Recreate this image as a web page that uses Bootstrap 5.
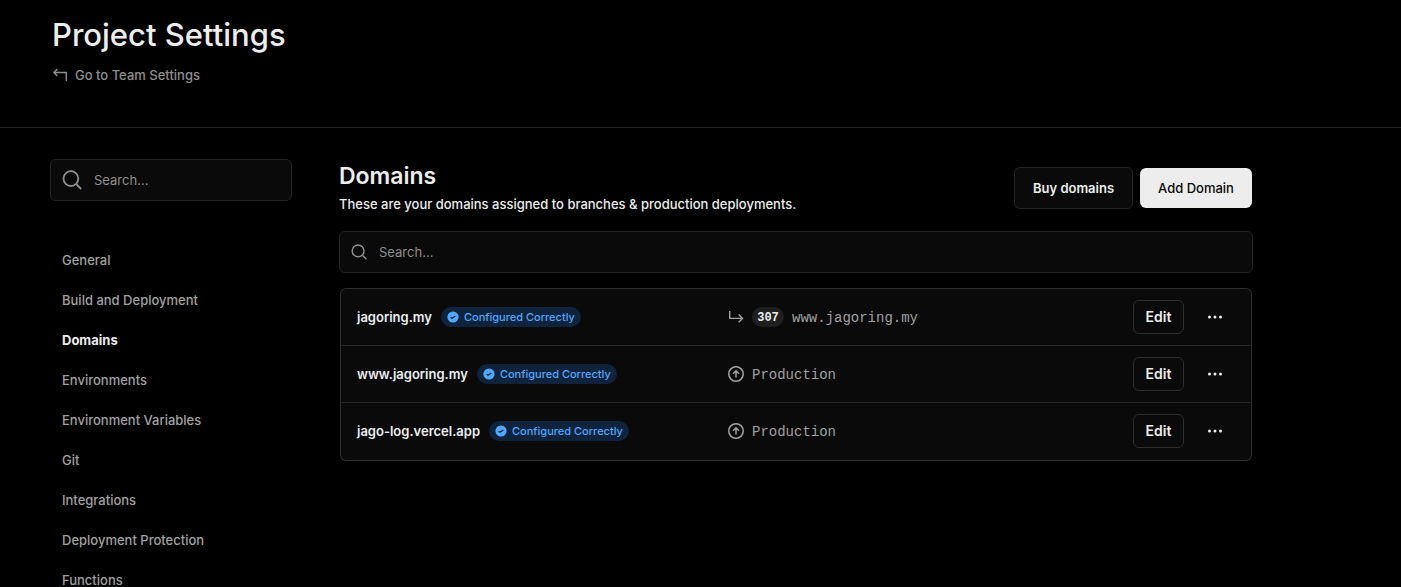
<!DOCTYPE html>
<html lang="en" data-bs-theme="dark">
<head>
<meta charset="utf-8">
<meta name="viewport" content="width=device-width, initial-scale=1">
<title>Project Settings – Domains</title>
<link href="https://cdn.jsdelivr.net/npm/bootstrap@5.3.0/dist/css/bootstrap.min.css" rel="stylesheet">
<style>
  :root { --line: #242424; --panel: #0a0a0a; --bright: #ededed; --dim: #a1a1a1; --faint: #8f8f8f; }
  body { background: #000; color: var(--bright); font-family: Inter, "Liberation Sans", sans-serif; font-size: 13px; font-weight: 500; line-height: 20px; }
  .page-head { border-bottom: 1px solid var(--line); padding: 15px 52px 42px; }
  .page-head h1 { color: var(--bright); font-size: 31px; line-height: 40px; font-weight: 500; margin-bottom: 10px; }
  .team-link { color: var(--faint); height: 20px; vertical-align: top; }
  .layout { max-width: 1253px; padding: 31px 0 0 50px; gap: 47px; }
  .sidebar { flex: 0 0 242px; }
  .search-box { height: 42px; background: var(--panel); border: 1px solid var(--line); border-radius: 6px; padding: 0 11px; color: var(--faint); }
  .search-box input { background: transparent; border: 0; outline: 0; color: var(--bright); font-size: 13px; }
  .search-box input::placeholder { color: var(--faint); opacity: 1; }
  .side-nav { margin-top: 39px; }
  .side-nav .nav-link { color: var(--dim); font-size: 13px; font-weight: 500; line-height: 20px; padding: 10px 12px; }
  .side-nav .nav-link.active { color: var(--bright); font-weight: 700; }
  .main-head { padding: 0 1px 17px 0; }
  .main-head h2 { color: var(--bright); font-size: 23px; line-height: 32px; font-weight: 600; margin: 1px 0 2px; }
  .main-head p { margin: 0; }
  .head-actions { gap: 7px; }
  .row-actions { gap: 15px; }
  .btn { font-size: 13px; font-weight: 500; line-height: 20px; border-radius: 6px; }
  .btn-panel { --bs-btn-color: var(--bright); --bs-btn-bg: var(--panel); --bs-btn-border-color: #2e2e2e; --bs-btn-hover-bg: #1a1a1a; --bs-btn-hover-color: #fff; font-weight: 600; }
  .btn-buy { height: 42px; width: 119px; padding: 0; --bs-btn-border-color: var(--line); }
  .btn-add { height: 40px; width: 112px; padding: 0; border: 0; background: var(--bright); color: #0a0a0a; }
  .btn-edit { width: 51px; height: 34px; padding: 0; font-size: 14px; }
  .btn-more { width: 32px; height: 32px; padding: 0; border: 0; color: var(--bright); }
  .btn-more svg { display: block; margin: 0 auto; }
  .domain-list { margin: 15px 1px 0; --bs-list-group-bg: var(--panel); --bs-list-group-border-color: #2e2e2e; border-radius: 6px; }
  .domain-row { height: 57px; padding: 0 20px 0 16px; }
  .domain-row:first-child { height: 58px; }
  .domain-row:last-child { height: 58px; padding-bottom: 1px; }
  .domain-row:not(:last-child) { border-bottom-color: var(--line); }
  .name-cell { flex: 0 0 371px; gap: 9px; }
  .domain-name { color: var(--bright); font-weight: 600; text-decoration: none; }
  .status-pill { background: #0f233d; color: #52a8ff; border-radius: 10px; height: 20px; padding: 0 6px; font-size: 11px; gap: 5px; }
  .target-cell { color: var(--dim); font-family: "Liberation Mono", monospace; font-size: 14px; font-weight: 400; line-height: 22px; gap: 8px; }
  .target-cell span { padding-top: 1px; }
  .code-pill { background: #1f1f1f; color: var(--bright); border-radius: 10px; height: 20px; width: 32px; font-size: 12px; font-weight: 700; }
</style>
</head>
<body>
<div class="vh-100 overflow-hidden">
  <svg class="d-none" aria-hidden="true">
    <symbol id="i-search" viewBox="0 0 20 20"><circle cx="8.9" cy="8.6" r="7.4" fill="none" stroke="currentColor" stroke-width="1.8"/><path d="M14.2 14l5 5" stroke="currentColor" stroke-width="1.8"/></symbol>
    <symbol id="i-check" viewBox="0 0 12 12"><circle cx="6" cy="6" r="5.6" fill="#52a8ff"/><path d="M3.6 6.3l1.4 1L8.4 4.9" fill="none" stroke="#0f233d" stroke-width="1.2"/></symbol>
    <symbol id="i-up" viewBox="0 0 16 16"><g fill="none" stroke="currentColor" stroke-width="1.5"><circle cx="8" cy="8" r="7.25"/><path d="M8 11.6V5M5 7.8l3-3 3 3"/></g></symbol>
    <symbol id="i-dots" viewBox="0 0 16 16"><g fill="currentColor"><circle cx="2.5" cy="8" r="1.5"/><circle cx="8" cy="8" r="1.5"/><circle cx="13.5" cy="8" r="1.5"/></g></symbol>
  </svg>

  <header class="page-head">
    <h1>Project Settings</h1>
    <a href="#" class="team-link d-inline-flex align-items-center gap-2 text-decoration-none">
      <svg width="15" height="14" viewBox="0 0 15 14" fill="none" stroke="currentColor" stroke-width="1.4" aria-hidden="true"><path d="M5.4 1L1.9 4.5 5.4 8M1.9 4.5h12.4V13"/></svg>
      Go to Team Settings
    </a>
  </header>

  <div class="layout d-flex align-items-start">
    <aside class="sidebar">
      <label class="search-box d-flex align-items-center gap-2">
        <svg class="flex-shrink-0 me-1" width="20" height="20" aria-hidden="true"><use href="#i-search"/></svg>
        <input type="search" class="flex-grow-1 p-0 w-100" placeholder="Search..." aria-label="Search settings">
      </label>
      <nav class="side-nav nav flex-column" aria-label="Project settings">
        <a class="nav-link" href="#">General</a>
        <a class="nav-link" href="#">Build and Deployment</a>
        <a class="nav-link active" aria-current="page" href="#">Domains</a>
        <a class="nav-link" href="#">Environments</a>
        <a class="nav-link" href="#">Environment Variables</a>
        <a class="nav-link" href="#">Git</a>
        <a class="nav-link" href="#">Integrations</a>
        <a class="nav-link" href="#">Deployment Protection</a>
        <a class="nav-link" href="#">Functions</a>
      </nav>
    </aside>

    <main class="flex-grow-1">
      <div class="main-head d-flex justify-content-between align-items-start">
        <div>
          <h2>Domains</h2>
          <p>These are your domains assigned to branches &amp; production deployments.</p>
        </div>
        <div class="head-actions d-flex align-items-center mt-2">
          <button type="button" class="btn btn-panel btn-buy">Buy domains</button>
          <button type="button" class="btn btn-add">Add Domain</button>
        </div>
      </div>

      <label class="search-box d-flex align-items-center gap-2">
        <svg class="flex-shrink-0 me-1" width="16" height="16" aria-hidden="true"><use href="#i-search"/></svg>
        <input type="search" class="flex-grow-1 p-0" placeholder="Search..." aria-label="Search domains">
      </label>

      <ul class="domain-list list-group">
        <li class="domain-row list-group-item d-flex align-items-center">
          <div class="name-cell d-flex align-items-center">
            <a href="#" class="domain-name">jagoring.my</a>
            <span class="status-pill d-inline-flex align-items-center"><svg width="12" height="12" aria-hidden="true"><use href="#i-check"/></svg>Configured Correctly</span>
          </div>
          <div class="target-cell d-flex align-items-center flex-grow-1">
            <svg width="16" height="16" viewBox="0 0 16 16" fill="none" stroke="currentColor" stroke-width="1.4" aria-hidden="true"><path d="M1.7 2v7.4h12.6M10.7 5.6l3.8 3.8-3.8 3.8"/></svg>
            <span class="code-pill d-inline-flex align-items-center justify-content-center">307</span>
            <span>www.jagoring.my</span>
          </div>
          <div class="row-actions d-flex align-items-center">
            <button type="button" class="btn btn-panel btn-edit">Edit</button>
            <button type="button" class="btn btn-more" aria-label="More options"><svg width="16" height="16" aria-hidden="true"><use href="#i-dots"/></svg></button>
          </div>
        </li>
        <li class="domain-row list-group-item d-flex align-items-center">
          <div class="name-cell d-flex align-items-center">
            <a href="#" class="domain-name">www.jagoring.my</a>
            <span class="status-pill d-inline-flex align-items-center"><svg width="12" height="12" aria-hidden="true"><use href="#i-check"/></svg>Configured Correctly</span>
          </div>
          <div class="target-cell d-flex align-items-center flex-grow-1">
            <svg width="16" height="16" aria-hidden="true"><use href="#i-up"/></svg>
            <span>Production</span>
          </div>
          <div class="row-actions d-flex align-items-center">
            <button type="button" class="btn btn-panel btn-edit">Edit</button>
            <button type="button" class="btn btn-more" aria-label="More options"><svg width="16" height="16" aria-hidden="true"><use href="#i-dots"/></svg></button>
          </div>
        </li>
        <li class="domain-row list-group-item d-flex align-items-center">
          <div class="name-cell d-flex align-items-center">
            <a href="#" class="domain-name">jago-log.vercel.app</a>
            <span class="status-pill d-inline-flex align-items-center"><svg width="12" height="12" aria-hidden="true"><use href="#i-check"/></svg>Configured Correctly</span>
          </div>
          <div class="target-cell d-flex align-items-center flex-grow-1">
            <svg width="16" height="16" aria-hidden="true"><use href="#i-up"/></svg>
            <span>Production</span>
          </div>
          <div class="row-actions d-flex align-items-center">
            <button type="button" class="btn btn-panel btn-edit">Edit</button>
            <button type="button" class="btn btn-more" aria-label="More options"><svg width="16" height="16" aria-hidden="true"><use href="#i-dots"/></svg></button>
          </div>
        </li>
      </ul>
    </main>
  </div>
</div>
<script src="https://cdn.jsdelivr.net/npm/bootstrap@5.3.0/dist/js/bootstrap.bundle.min.js"></script>
</body>
</html>
